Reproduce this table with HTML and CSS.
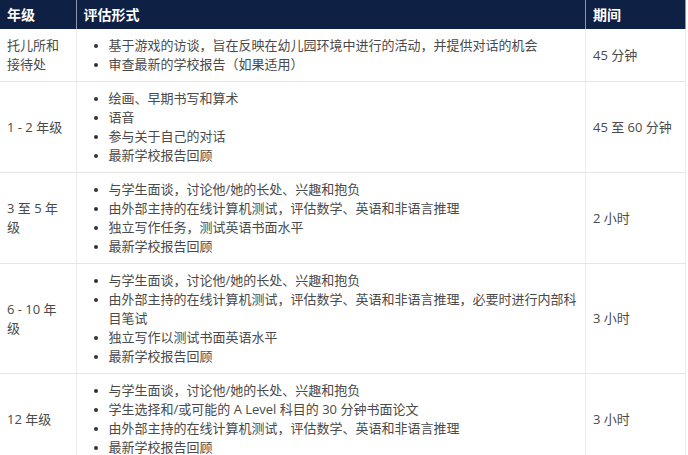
FILE: index.html
```html
<!DOCTYPE html>
<html lang="zh-CN">
<head>
  <meta charset="UTF-8">
  <meta name="viewport" content="width=device-width, initial-scale=1.0">
  <title>评估形式</title>
  <link rel="stylesheet" href="styles.css">
</head>
<body>
  <table class="assess">
    <thead>
      <tr>
        <th class="col-grade">年级</th>
        <th class="col-form">评估形式</th>
        <th class="col-time">期间</th>
      </tr>
    </thead>
    <tbody>
      <tr>
        <td>托儿所和接待处</td>
        <td>
          <ul>
            <li>基于游戏的访谈，旨在反映在幼儿园环境中进行的活动，并提供对话的机会</li>
            <li>审查最新的学校报告（如果适用）</li>
          </ul>
        </td>
        <td>45 分钟</td>
      </tr>
      <tr>
        <td>1 - 2 年级</td>
        <td>
          <ul>
            <li>绘画、早期书写和算术</li>
            <li>语音</li>
            <li>参与关于自己的对话</li>
            <li>最新学校报告回顾</li>
          </ul>
        </td>
        <td>45 至 60 分钟</td>
      </tr>
      <tr>
        <td>3 至 5 年级</td>
        <td>
          <ul>
            <li>与学生面谈，讨论他/她的长处、兴趣和抱负</li>
            <li>由外部主持的在线计算机测试，评估数学、英语和非语言推理</li>
            <li>独立写作任务，测试英语书面水平</li>
            <li>最新学校报告回顾</li>
          </ul>
        </td>
        <td>2 小时</td>
      </tr>
      <tr>
        <td>6 - 10 年级</td>
        <td>
          <ul>
            <li>与学生面谈，讨论他/她的长处、兴趣和抱负</li>
            <li>由外部主持的在线计算机测试，评估数学、英语和非语言推理，必要时进行内部科目笔试</li>
            <li>独立写作以测试书面英语水平</li>
            <li>最新学校报告回顾</li>
          </ul>
        </td>
        <td>3 小时</td>
      </tr>
      <tr>
        <td>12 年级</td>
        <td>
          <ul>
            <li>与学生面谈，讨论他/她的长处、兴趣和抱负</li>
            <li>学生选择和/或可能的 A Level 科目的 30 分钟书面论文</li>
            <li>由外部主持的在线计算机测试，评估数学、英语和非语言推理</li>
            <li>最新学校报告回顾</li>
          </ul>
        </td>
        <td>3 小时</td>
      </tr>
    </tbody>
  </table>
</body>
</html>
```

FILE: styles.css
```css
body {
  margin: 0;
  padding: 0;
  background-color: #fff;
  font-family: "Open Sans", "Noto Sans CJK SC", sans-serif;
  font-size: 13px;
  line-height: 19px;
  color: #4a4a4a;
}

.assess {
  width: 686px;
  border-collapse: collapse;
  table-layout: fixed;
}

.assess th {
  height: 29px;
  padding: 0 7px;
  background-color: #0e2145;
  color: #fff;
  font-size: 14px;
  font-weight: bold;
  text-align: left;
  border-right: 1px solid #8a96ab;
  box-sizing: border-box;
}

.col-grade {
  width: 76px;
}

.col-time {
  width: 100px;
}

.assess td {
  padding: 7px 7px;
  vertical-align: middle;
  border-right: 1px solid #ececec;
  border-bottom: 1px solid #e6e6e6;
}

.assess td ul {
  margin: 0;
  padding: 0 0 0 25px;
}

.assess td li {
  margin-right: -4px;
}

.assess td li::marker {
  color: #333;
  font-size: 11px;
}
```
